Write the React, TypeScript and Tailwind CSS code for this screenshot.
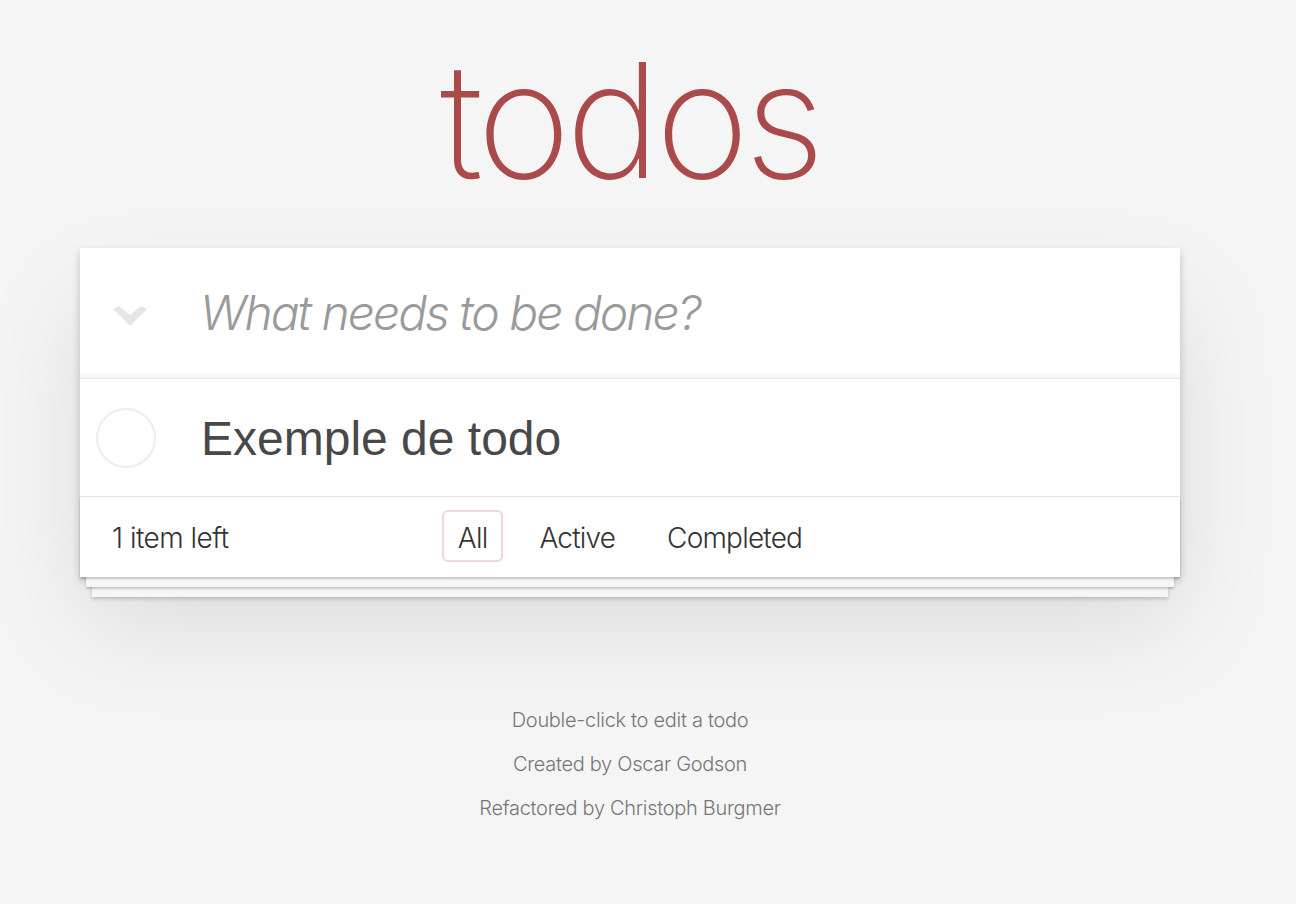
import { useState } from 'react';

const FILTERS = ['All', 'Active', 'Completed'];

function ToggleAllIcon() {
  return (
    <svg width="34" height="20" viewBox="0 0 34 20">
      <polygon points="0,3 6,0 17,9 28,0 34,3 17,20" fill="#e6e6e6" />
    </svg>
  );
}

export default function App() {
  const [filter, setFilter] = useState('All');

  return (
    <div className="min-h-screen bg-[#f5f5f5] font-['Inter','Liberation_Sans',sans-serif] font-light text-[#4d4d4d]">
      <div className="ml-[80px] w-[1100px] pt-[40px]">
        {/* Title */}
        <h1 className="text-center text-[160px] leading-[160px] font-extralight text-[#aa4a4b] tracking-[-5px]">todos</h1>

        {/* Card */}
        <div className="mt-[48px] bg-white shadow-[0_4px_8px_0_rgba(0,0,0,0.2),0_50px_100px_0_rgba(0,0,0,0.1)]">
          {/* New todo */}
          <div className="flex h-[130px] items-center shadow-[inset_0_-4px_2px_rgba(0,0,0,0.03)]">
            <div className="flex w-[120px] items-center pl-[33px] pt-[6px]">
              <ToggleAllIcon />
            </div>
            <span className="text-[48px] italic text-[#9a9a9a] tracking-[-2px]">What needs to be done?</span>
          </div>

          {/* List */}
          <ul className="border-t border-[#e6e6e6]">
            <li className="flex h-[117px] items-center">
              <div className="flex w-[121px] items-center pl-[16px]">
                <div className="h-[60px] w-[60px] rounded-full border-2 border-[#ededed]" />
              </div>
              <span className="font-['Liberation_Sans',sans-serif] font-normal text-[48px] text-[#484848] pt-[2px]">Exemple de todo</span>
            </li>
          </ul>

          {/* Footer */}
          <div className="relative flex h-[81px] items-center border-t border-[#e6e6e6] px-[32px] pt-[2px] text-[28px] text-[#333] shadow-[0_2px_2px_rgba(0,0,0,0.2),0_16px_0_-6px_#f6f6f6,0_18px_2px_-6px_rgba(0,0,0,0.2),0_32px_0_-12px_#f6f6f6,0_34px_4px_-12px_rgba(0,0,0,0.2)]">
            <span className="tracking-[-0.5px]">1 item left</span>
            <ul className="absolute inset-x-0 top-[13px] flex justify-center gap-[20px]">
              {FILTERS.map((f) => (
                <li key={f}>
                  <button
                    onClick={() => setFilter(f)}
                    className={`rounded-[6px] border-2 px-[14px] pt-[6px] pb-[2px] leading-[40px] tracking-[-0.8px] ${
                      filter === f ? 'border-[#efd8d8]' : 'border-transparent'
                    }`}
                  >
                    {f}
                  </button>
                </li>
              ))}
            </ul>
          </div>
        </div>

        {/* Info */}
        <div className="mt-[133px] flex flex-col items-center gap-[24px] text-[20px] leading-[20px] text-[#777] tracking-[-0.3px]">
          <p>Double-click to edit a todo</p>
          <p>Created by Oscar Godson</p>
          <p>Refactored by Christoph Burgmer</p>
        </div>
      </div>
    </div>
  );
}
